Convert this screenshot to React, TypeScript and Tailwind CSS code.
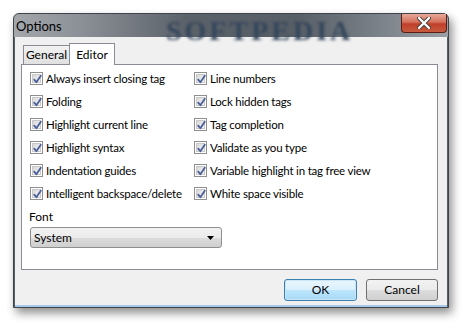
import React from "react";

const leftItems = [
  "Always insert closing tag",
  "Folding",
  "Highlight current line",
  "Highlight syntax",
  "Indentation guides",
  "Intelligent backspace/delete",
];

const rightItems = [
  "Line numbers",
  "Lock hidden tags",
  "Tag completion",
  "Validate as you type",
  "Variable highlight in tag free view",
  "White space visible",
];

const font = { fontFamily: '"Segoe UI", Lato, "Noto Sans", Arial, sans-serif' };

function CheckBox() {
  return (
    <div className="w-[13px] h-[13px] shrink-0 border border-[#8e8f8f] bg-white p-[1px]">
      <div className="relative w-full h-full bg-[linear-gradient(135deg,#d8d8d8,#f6f6f6)] border border-[#c9c9c9]">
        <svg
          viewBox="0 0 9 9"
          className="absolute left-[0px] top-[0px] w-[9px] h-[9px] overflow-visible"
        >
          <path
            d="M1.2 4.6 L3.4 7.2 L7.8 0.8"
            fill="none"
            stroke="#4a5f9a"
            strokeWidth="1.8"
            strokeLinecap="round"
            strokeLinejoin="round"
          />
        </svg>
      </div>
    </div>
  );
}

function Row({ label }: { label: string }) {
  return (
    <div className="flex items-center gap-[3px] h-[23px]">
      <CheckBox />
      <span className="text-[11.5px] tracking-[-0.2px] leading-none text-black whitespace-nowrap">
        {label}
      </span>
    </div>
  );
}

export default function App() {
  return (
    <div
      className="w-[470px] h-[329px] bg-white pt-[13px] pl-[13px] overflow-hidden"
      style={font}
    >
      <div className="w-[436px] h-[295px] flex flex-col rounded-t-[6px] border border-[#40454b] shadow-[3px_5px_10px_rgba(0,0,0,0.45)] bg-[#585e66]">
        {/* title bar */}
        <div className="relative h-[23px] flex items-start rounded-t-[5px] bg-[linear-gradient(90deg,#a3a7ac_0%,#8c9197_15%,#5b6169_40%,#575e66_65%,#7d838a_85%,#9a9fa5_100%)]">
          <span className="pl-[2px] pt-[3px] text-[13px] text-black">Options</span>
          <span
            className="absolute left-[152px] top-[-4px] text-[28px] font-bold tracking-[3px] text-[#34465c] blur-[1.4px]"
            style={{ fontFamily: '"Liberation Serif", serif' }}
          >
            SOFTPEDIA
          </span>
          <div className="relative ml-auto mr-[1px] w-[46px] h-[19px] flex items-center justify-center rounded-b-[4px] border border-[#5a1e14] border-t-0 bg-[linear-gradient(180deg,#e9a898_0%,#d4705c_45%,#c0402a_55%,#c65a3e_100%)]">
            <svg viewBox="0 0 14 12" className="w-[14px] h-[12px]">
              <path
                d="M2 1 L12 11 M12 1 L2 11"
                stroke="#3a3a3a"
                strokeWidth="4"
                strokeLinecap="round"
              />
              <path
                d="M2 1 L12 11 M12 1 L2 11"
                stroke="#ffffff"
                strokeWidth="2.4"
                strokeLinecap="round"
              />
            </svg>
          </div>
        </div>

        {/* client area */}
        <div className="flex-1 mx-[1px] border-b-2 border-[#a9c9ea] bg-[#f0f0f0] flex flex-col pl-[6px] pr-[9px] pt-[6px]">
          {/* tabs */}
          <div className="flex items-end h-[21px] pl-[2px]">
            <div className="h-[19px] w-[47px] flex items-center justify-center border border-b-0 border-[#898c95] bg-[linear-gradient(180deg,#f2f2f2,#e0e0e0)] text-[12px]">
              General
            </div>
            <div className="relative z-10 h-[22px] -mb-[1px] w-[46px] flex items-start justify-center pt-[2px] border border-b-0 border-[#898c95] bg-white text-[12px] -ml-[1px]">
              Editor
            </div>
          </div>

          {/* panel */}
          <div className="h-[206px] border border-[#898c95] bg-white pl-[8px] pt-[2px]">
            <div className="flex">
              <div className="w-[164px] flex flex-col">
                {leftItems.map((t) => (
                  <Row key={t} label={t} />
                ))}
              </div>
              <div className="flex flex-col">
                {rightItems.map((t) => (
                  <Row key={t} label={t} />
                ))}
              </div>
            </div>
            <div className="mt-[6px] text-[12px] leading-none -ml-[1px]">Font</div>
            <div className="mt-[4px] w-[192px] h-[21px] flex items-center justify-between pl-[3px] pr-[7px] rounded-[3px] border border-[#8e8f8f] bg-[linear-gradient(180deg,#f2f2f2_0%,#ebebeb_50%,#dddddd_51%,#cfcfcf_100%)] text-[12px]">
              <span>System</span>
              <svg viewBox="0 0 7 4" className="w-[7px] h-[4px]">
                <path d="M0 0 H7 L3.5 4 Z" fill="#000" />
              </svg>
            </div>
          </div>

          {/* buttons */}
          <div className="flex justify-end gap-[9px] mt-[9px]">
            <button className="w-[73px] h-[22px] rounded-[3px] border border-[#3c7fb1] bg-[linear-gradient(180deg,#eaf6fd_0%,#d9f0fc_50%,#bee6fd_51%,#a7d9f5_100%)] text-[12px] shadow-[inset_0_0_0_1px_#c8e6f8]">
              OK
            </button>
            <button className="w-[72px] h-[22px] rounded-[3px] border border-[#707070] bg-[linear-gradient(180deg,#f2f2f2_0%,#ebebeb_50%,#dddddd_51%,#cfcfcf_100%)] text-[12px]">
              Cancel
            </button>
          </div>
        </div>
      </div>
    </div>
  );
}
